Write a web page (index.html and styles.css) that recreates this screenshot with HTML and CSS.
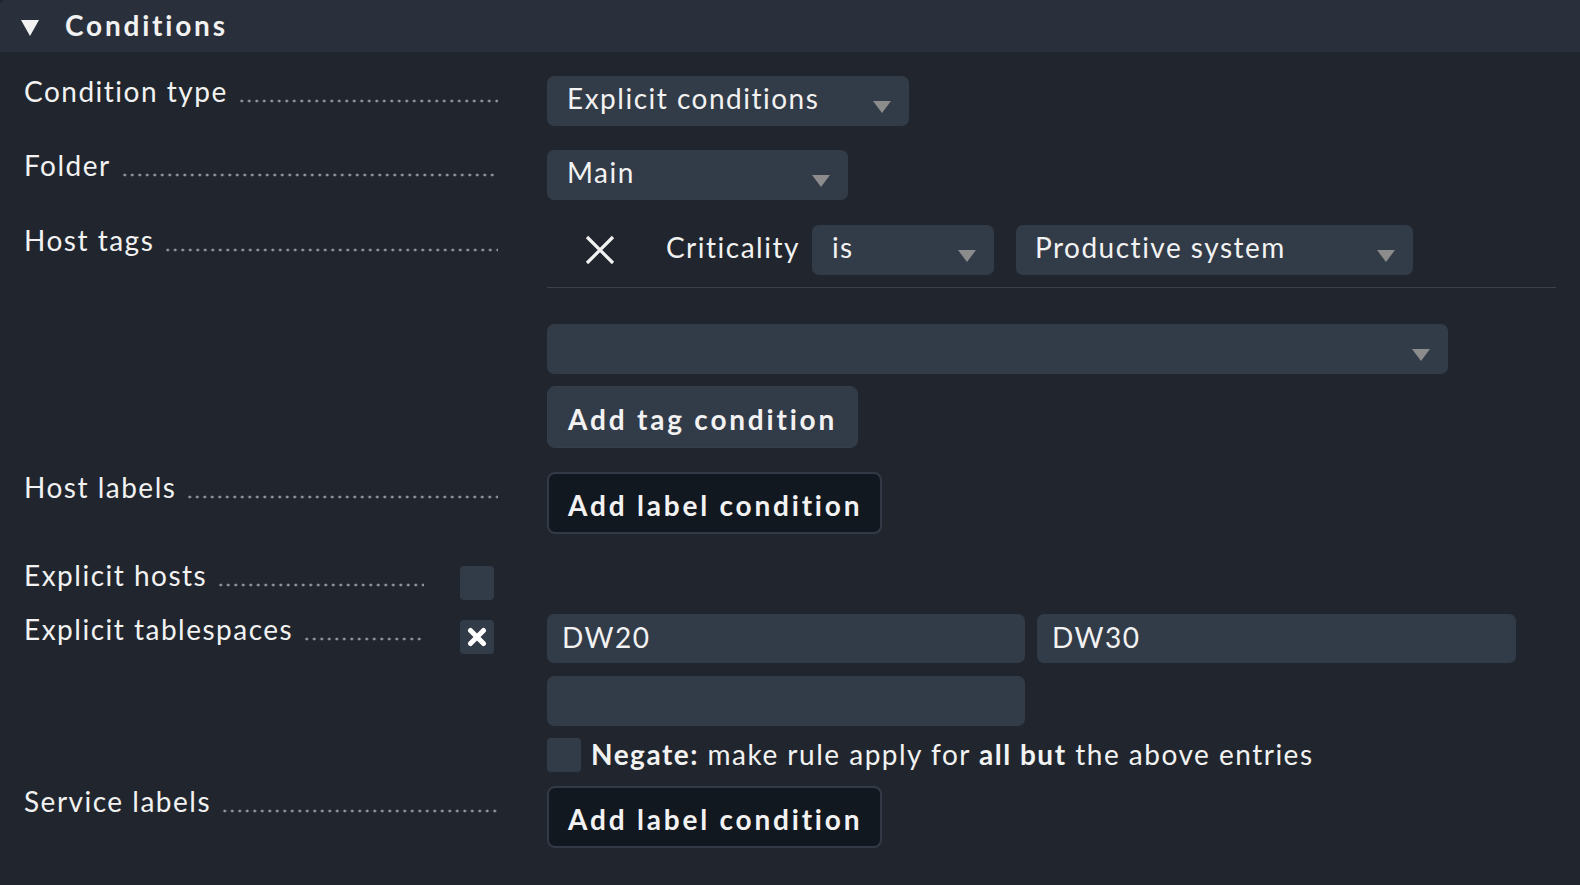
FILE: index.html
```html
<!DOCTYPE html>
<html>
<head>
<meta charset="utf-8">
<title>Conditions</title>
<link rel="stylesheet" href="styles.css">
</head>
<body>
<div class="section">
  <div class="header"><span class="tri"></span><span class="title">Conditions</span></div>
  <div class="form">
    <div class="row r1">
      <div class="label"><span class="ltext">Condition type</span><span class="dots"></span></div>
      <div class="ctrl">
        <div class="select w-ctype"><span>Explicit conditions</span><i class="arrow"></i></div>
      </div>
    </div>
    <div class="row r2">
      <div class="label"><span class="ltext">Folder</span><span class="dots"></span></div>
      <div class="ctrl">
        <div class="select w-folder"><span>Main</span><i class="arrow"></i></div>
      </div>
    </div>
    <div class="row r3">
      <div class="label"><span class="ltext">Host tags</span><span class="dots"></span></div>
      <div class="ctrl col">
        <div class="tagline">
          <svg class="xicon" width="30" height="30" viewBox="0 0 30 30"><path d="M2 2 L28 28 M28 2 L2 28" stroke="#f2f2f2" stroke-width="3.2" stroke-linecap="butt"/></svg>
          <span class="tagname">Criticality</span>
          <div class="select w-is"><span>is</span><i class="arrow"></i></div>
          <div class="select w-prod"><span>Productive system</span><i class="arrow"></i></div>
        </div>
        <div class="sep"></div>
        <div class="select w-tagsel"><span></span><i class="arrow"></i></div>
        <div class="btn btn-light">Add tag condition</div>
      </div>
    </div>
    <div class="row r4">
      <div class="label"><span class="ltext">Host labels</span><span class="dots"></span></div>
      <div class="ctrl">
        <div class="btn btn-dark">Add label condition</div>
      </div>
    </div>
    <div class="row r5">
      <div class="label"><span class="ltext">Explicit hosts</span><span class="dots"></span><span class="cb"></span></div>
    </div>
    <div class="row r6">
      <div class="label"><span class="ltext">Explicit tablespaces</span><span class="dots"></span><span class="cb checked"><svg width="20" height="20" viewBox="0 0 20 20"><path d="M3.5 3.5 L16.5 16.5 M16.5 3.5 L3.5 16.5" stroke="#ffffff" stroke-width="5" stroke-linecap="round"/></svg></span></div>
      <div class="ctrl col">
        <div class="inputs">
          <div class="input">DW20</div>
          <div class="input">DW30</div>
        </div>
        <div class="input empty"></div>
        <div class="negate"><span class="cb2"></span><span class="ntext"><b>Negate:</b> make rule apply for <b>all but</b> the above entries</span></div>
      </div>
    </div>
    <div class="row r7">
      <div class="label"><span class="ltext">Service labels</span><span class="dots"></span></div>
      <div class="ctrl">
        <div class="btn btn-dark">Add label condition</div>
      </div>
    </div>
  </div>
</div>
</body>
</html>
```

FILE: styles.css
```css
* { box-sizing: border-box; }
html, body { height: 100%; }
body {
  margin: 0;
  background: #21262e;
  font-family: Lato, "Noto Sans", sans-serif;
  font-size: 28px;
  color: #f2f2f2;
  letter-spacing: 1.5px;
}
.section { min-height: 100%; }
.header {
  height: 52px;
  background: #2a303b;
  display: flex;
  align-items: center;
  padding-left: 21px;
  border-top-left-radius: 6px;
}
.tri {
  width: 0; height: 0;
  border-left: 9px solid transparent;
  border-right: 9px solid transparent;
  border-top: 16px solid #f2f2f2;
  margin-top: 4px;
}
.title {
  margin-left: 26px;
  font-weight: bold;
  letter-spacing: 2.8px;
  line-height: 30px;
  padding-bottom: 2px;
}
.form { padding-top: 24px; }
.row { display: flex; align-items: flex-start; }
.label {
  width: 495px;
  padding-left: 24px;
  display: flex;
  align-items: flex-start;
  line-height: 30px;
  flex: none;
}
.ltext { white-space: nowrap; }
.dots {
  flex: 1;
  height: 30px;
  margin-left: 10px;
  margin-right: -3px;
  background-image: radial-gradient(circle, #959aa2 0 1.2px, transparent 1.7px);
  background-size: 7.5px 6px;
  background-repeat: repeat-x;
  background-position: 0 22px;
}
.cb, .cb2 {
  width: 34px; height: 34px;
  background: #323b48;
  border-radius: 4px;
  flex: none;
}
.cb { margin-right: 1px; margin-top: 6px; }
.label .cb { margin-left: 39px; }
.cb.checked {
  display: flex; align-items: center; justify-content: center;
}
.ctrl { margin-left: 52px; }
.ctrl.col { display: flex; flex-direction: column; align-items: flex-start; }
.select {
  position: relative;
  height: 50px;
  background: #323b48;
  border-radius: 7px;
  padding: 0 0 7px 20px;
  display: flex;
  align-items: center;
  line-height: 34px;
  white-space: nowrap;
}
.arrow {
  position: absolute;
  right: 18px; top: 25px;
  width: 0; height: 0;
  border-left: 9px solid transparent;
  border-right: 9px solid transparent;
  border-top: 12px solid #8c8c8c;
}
.w-ctype { width: 362px; }
.w-folder { width: 301px; }
.w-is { width: 182px; }
.w-prod { width: 397px; padding-left: 19px; margin-left: 22px; }
.w-tagsel { width: 901px; margin-top: 36px; }
.r2 { margin-top: 24px; }
.r3 { margin-top: 25px; }
.tagline { display: flex; align-items: center; height: 50px; }
.xicon { margin-left: 38px; flex: none; }
.tagname { margin-left: 51px; margin-right: 12px; padding-bottom: 7px; line-height: 34px; }
.sep { width: 1009px; height: 1px; background: #3a424f; margin-top: 12px; }
.btn {
  height: 62px;
  border-radius: 8px;
  display: flex;
  align-items: center;
  font-weight: bold;
  letter-spacing: 2.8px;
  white-space: nowrap;
  padding-top: 3px;
}
.btn-light { background: #323b48; width: 311px; padding-left: 20px; margin-top: 12px; border: 1px solid #353e4b; }
.btn-dark { background: #121820; width: 335px; padding-left: 19px; border: 2px solid #333a46; }
.r4 { margin-top: 24px; }
.r5 { margin-top: 26px; }
.r6 { margin-top: 14px; }
.inputs { display: flex; gap: 12px; }
.input {
  width: 478px; height: 49px;
  background: #323b48;
  border-radius: 7px;
  padding: 0 0 3px 15px;
  display: flex; align-items: center;
}
.inputs .input + .input { width: 479px; }
.input.empty { margin-top: 13px; height: 50px; }
.negate { display: flex; align-items: center; margin-top: 12px; height: 34px; }
.ntext { margin-left: 10px; line-height: 30px; padding-bottom: 3px; white-space: nowrap; }
.r7 { margin-top: 14px; }
```
